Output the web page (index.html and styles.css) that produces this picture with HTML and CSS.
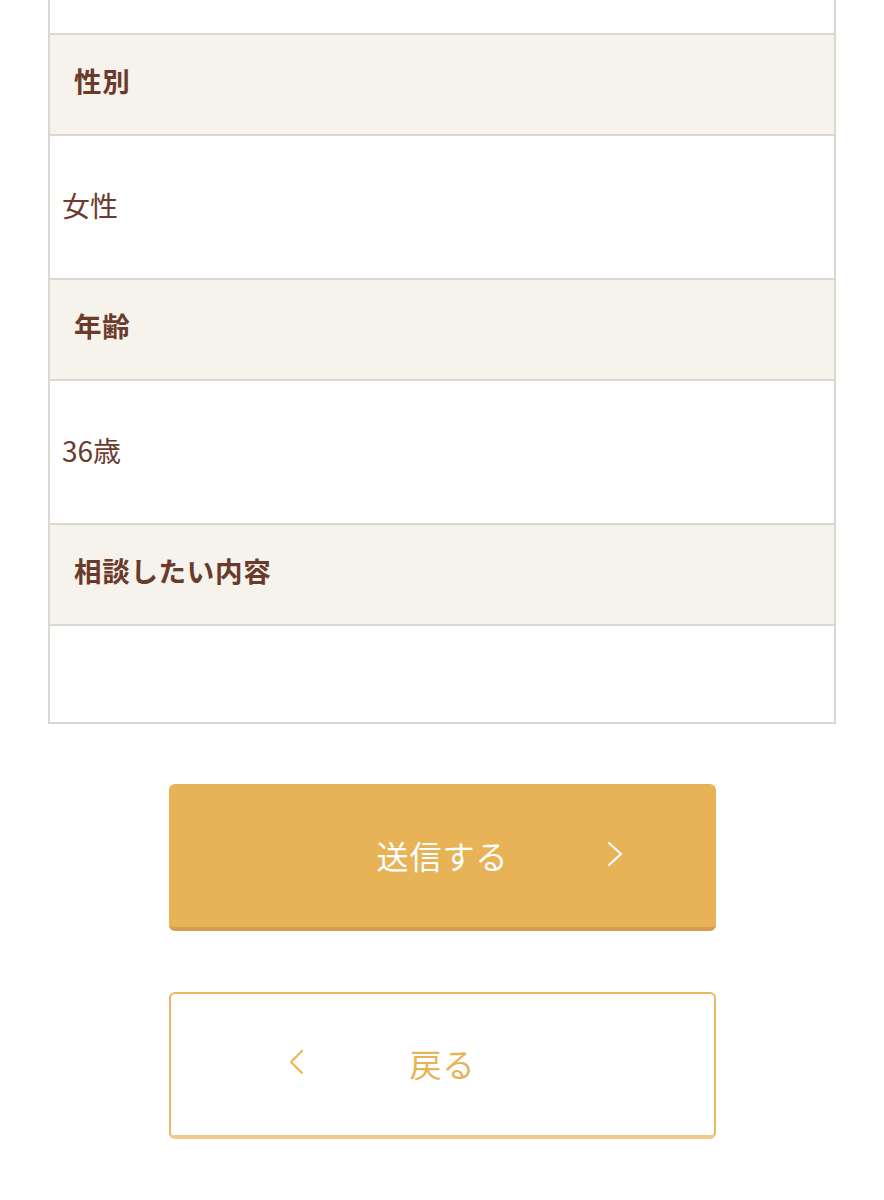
FILE: index.html
```html
<!DOCTYPE html>
<html lang="ja">
<head>
<meta charset="utf-8">
<link rel="stylesheet" href="styles.css">
</head>
<body>
<div class="page">
  <div class="table">
    <div class="cell value first"></div>
    <div class="cell head">性別</div>
    <div class="cell value">女性</div>
    <div class="cell head">年齢</div>
    <div class="cell value">36歳</div>
    <div class="cell head">相談したい内容</div>
    <div class="cell value last"></div>
  </div>
  <div class="actions">
    <button class="btn btn-submit" type="button">
      <span class="label">送信する</span>
      <svg class="chev chev-right" width="18" height="28" viewBox="0 0 18 28"><path d="M3 3 L15 14 L3 25" fill="none" stroke="#ffffff" stroke-width="2.2" stroke-linecap="round" stroke-linejoin="round"/></svg>
    </button>
    <button class="btn btn-back" type="button">
      <svg class="chev chev-left" width="18" height="30" viewBox="0 0 18 30"><path d="M14 4 L3 15 L14 26" fill="none" stroke="#eeb95e" stroke-width="2.4" stroke-linecap="round" stroke-linejoin="round"/></svg>
      <span class="label">戻る</span>
    </button>
  </div>
</div>
</body>
</html>
```

FILE: styles.css
```css
html, body {
  margin: 0;
  padding: 0;
  background: #ffffff;
}
body {
  font-family: "Noto Sans CJK JP", "Noto Sans", sans-serif;
  color: #6b3a2c;
}
.page {
  width: 884px;
}
.table {
  margin: 0 48px;
  border-left: 2px solid #dcd7d0;
  border-right: 2px solid #dcd7d0;
  border-bottom: 2px solid #dcd7d0;
  display: flex;
  flex-direction: column;
}
.cell {
  display: flex;
  align-items: center;
  border-top: 2px solid #dcd7d0;
  box-sizing: border-box;
}
.cell.first {
  border-top: none;
  height: 33px;
}
.head {
  background: #f6f2ec;
  height: 101px;
  padding-left: 24px;
  padding-bottom: 10px;
  font-size: 27.5px;
  font-weight: 700;
  letter-spacing: 0.7px;
  color: #6a3a2b;
}
.value {
  background: #ffffff;
  height: 144px;
  padding-left: 12px;
  padding-bottom: 4px;
  font-size: 28px;
  font-weight: 400;
  color: #6b3b2d;
}
.value.last {
  height: 98px;
}
.actions {
  display: flex;
  flex-direction: column;
  align-items: center;
  gap: 61px;
  padding-top: 60px;
  padding-left: 1px;
}
.btn {
  position: relative;
  width: 547px;
  height: 147px;
  box-sizing: border-box;
  border-radius: 6px;
  display: flex;
  align-items: center;
  justify-content: center;
  font-family: "Noto Sans CJK JP", sans-serif;
  font-size: 32px;
  font-weight: 400;
  padding: 0;
  cursor: pointer;
}
.btn-submit {
  background: #e8b256;
  border: none;
  border-bottom: 4px solid #d59d4f;
  color: #ffffff;
}
.btn-submit .label {
  margin-top: -2px;
  letter-spacing: 1px;
}
.btn-back {
  background: #ffffff;
  border: 2px solid #ebb862;
  border-bottom: 4px solid #f2c98a;
  color: #e8b256;
}
.btn-back .label {
  margin-top: -4px;
  letter-spacing: 1px;
}
.chev {
  position: absolute;
  top: 50%;
}
.chev-right {
  right: 92px;
  margin-top: -16px;
}
.chev-left {
  left: 117px;
  margin-top: -18px;
}
```
